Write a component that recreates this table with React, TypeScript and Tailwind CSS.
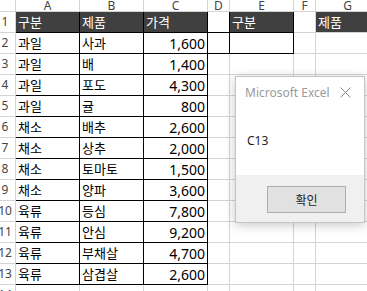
import React from "react";

const KR = "font-['Noto_Sans_CJK_KR','Noto_Sans',sans-serif]";
const NUM = "font-['Noto_Sans','Noto_Sans_CJK_KR',sans-serif]";

const rows: [string, string, string][] = [
  ["과일", "사과", "1,600"],
  ["과일", "배", "1,400"],
  ["과일", "포도", "4,300"],
  ["과일", "귤", "800"],
  ["채소", "배추", "2,600"],
  ["채소", "상추", "2,000"],
  ["채소", "토마토", "1,500"],
  ["채소", "양파", "3,600"],
  ["육류", "등심", "7,800"],
  ["육류", "안심", "9,200"],
  ["육류", "부채살", "4,700"],
  ["육류", "삼겹살", "2,600"],
];

const letters = ["A", "B", "C", "D", "E", "F", "G"];

function ColHeader({ label }: { label: string }) {
  return (
    <div className="flex items-end justify-center overflow-hidden border-r border-b border-[#d4d4d4] bg-white text-[12px] leading-[12px] text-[#444] font-['Noto_Sans',sans-serif]">
      <span className="-mb-[1px]">{label}</span>
    </div>
  );
}

function RowHeader({ n }: { n: number }) {
  return (
    <div className="flex items-center overflow-hidden border-r border-b border-[#d4d4d4] bg-white">
      <span className="-ml-[6px] w-[22px] shrink-0 text-center text-[12px] text-[#444] font-['Noto_Sans',sans-serif]">
        {n}
      </span>
    </div>
  );
}

type CellProps = {
  text?: string;
  dark?: boolean;
  right?: boolean;
  num?: boolean;
  border?: string;
};

function Cell({ text, dark, right, num, border }: CellProps) {
  return (
    <div
      className={`flex items-center overflow-visible whitespace-nowrap border-r border-b px-[2px] ${
        border ?? "border-[#d4d4d4]"
      } ${dark ? "bg-[#404040] text-white" : "bg-white text-black"} ${
        right ? "justify-end" : "justify-start"
      } ${num ? `${NUM} text-[14px]` : `${KR} text-[13px]`}`}
    >
      {text}
    </div>
  );
}

function CloseGlyph() {
  return (
    <svg width="11" height="11" viewBox="0 0 11 11" className="block">
      <path d="M0.5 0.5 L10.5 10.5 M10.5 0.5 L0.5 10.5" stroke="#8a8a8a" strokeWidth="1" fill="none" />
    </svg>
  );
}

export default function App() {
  const black = "border-black";
  return (
    <div className="relative h-[291px] w-[367px] overflow-hidden bg-white">
      <div className="grid grid-cols-[16px_64px_64px_64px_22px_64px_22px_64px] grid-rows-[12px_repeat(14,21px)]">
        <div className="border-r border-b border-[#d4d4d4] bg-white" />
        {letters.map((l) => (
          <ColHeader key={l} label={l} />
        ))}

        {/* row 1: table headers */}
        <RowHeader n={1} />
        <Cell text="구분" dark border={black} />
        <Cell text="제품" dark border={black} />
        <Cell text="가격" dark border={black} />
        <Cell border={black} />
        <Cell text="구분" dark border={black} />
        <Cell />
        <Cell text="제품" dark />

        {rows.map(([kind, item, price], i) => {
          const n = i + 2;
          return (
            <React.Fragment key={n}>
              <RowHeader n={n} />
              <Cell text={kind} border={black} />
              <Cell text={item} border={black} />
              <Cell text={price} right num border={black} />
              <Cell border={n === 2 ? black : undefined} />
              <Cell border={n === 2 ? black : undefined} />
              <Cell />
              <Cell />
            </React.Fragment>
          );
        })}

        <RowHeader n={14} />
        {letters.map((l) => (
          <Cell key={l} />
        ))}
      </div>

      {/* message box */}
      <div className="absolute left-[235px] top-[76px] flex h-[147px] w-[130px] flex-col border border-[#c4c4c4] bg-white shadow-[0_2px_10px_rgba(0,0,0,0.22)]">
        <div className="flex h-[31px] items-center justify-between pl-[9px] pr-[13px]">
          <span className="text-[12px] text-[#9a9a9a] font-['Noto_Sans',sans-serif]">Microsoft Excel</span>
          <CloseGlyph />
        </div>
        <div className="flex h-[67px] items-center pl-[11px] pb-[2px] text-[12px] text-[#222] font-['Noto_Sans',sans-serif]">
          C13
        </div>
        <div className="flex flex-1 items-start bg-[#f0f0f0] pl-[31px] pt-[11px]">
          <div className={`flex h-[27px] w-[79px] items-center justify-center border border-[#adadad] bg-[#e1e1e1] text-[12px] text-[#222] ${KR}`}>
            확인
          </div>
        </div>
      </div>
    </div>
  );
}
